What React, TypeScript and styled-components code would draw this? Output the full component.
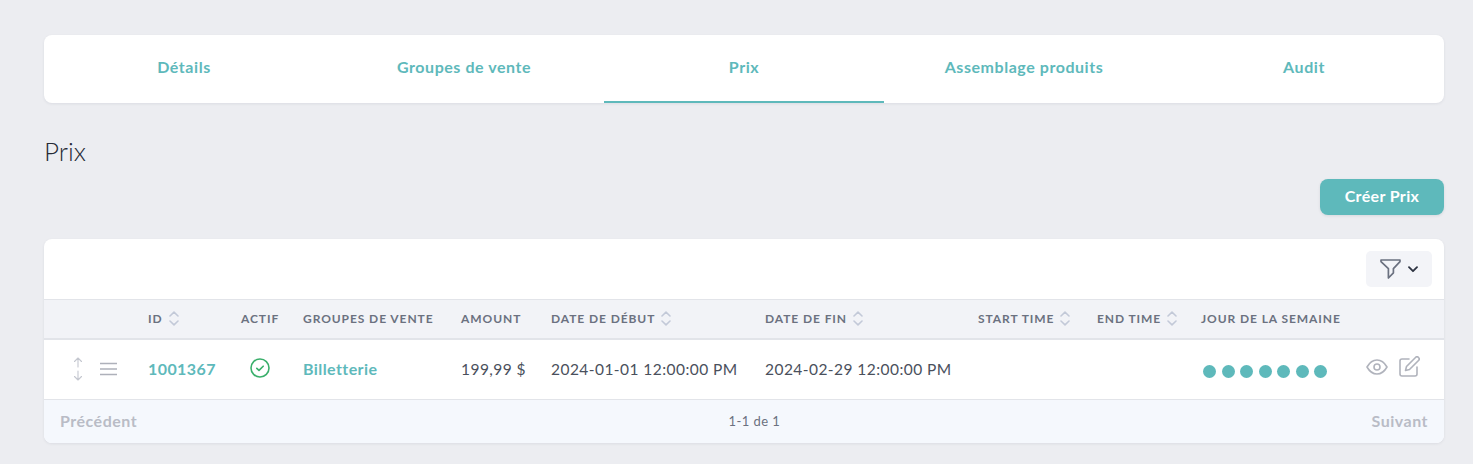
import React from "react";
import styled, { createGlobalStyle } from "styled-components";

const Global = createGlobalStyle`
  html, body { margin: 0; padding: 0; background: #ecedf1; }
  body { font-family: "Lato", "Open Sans", "Liberation Sans", sans-serif; color: #2d3341; }
  * { box-sizing: border-box; }
`;

const Page = styled.div`
  width: 1473px;
  height: 464px;
  padding: 35px 29px 0 44px;
  overflow: hidden;
`;

const Tabs = styled.nav`
  display: grid;
  grid-template-columns: repeat(5, 280px);
  height: 68px;
  background: #fff;
  border-radius: 8px;
  box-shadow: 0 1px 3px rgba(30, 40, 60, 0.08);
  overflow: hidden;
`;

const Tab = styled.a<{ $active?: boolean }>`
  display: flex;
  align-items: center;
  justify-content: center;
  font-size: 16px;
  font-weight: 700;
  letter-spacing: 0.55px;
  color: #5eb9bb;
  padding-bottom: 4px;
  border-bottom: 2px solid ${(p) => (p.$active ? "#5eb9bb" : "transparent")};
`;

const Title = styled.h2`
  margin: 33px 0 0;
  height: 30px;
  font-size: 26px;
  line-height: 30px;
  font-weight: 300;
  color: #262b36;
`;

const Actions = styled.div`
  display: flex;
  justify-content: flex-end;
  margin-top: 13px;
`;

const PrimaryButton = styled.button`
  width: 124px;
  height: 36px;
  padding: 0 0 3px;
  border: 0;
  border-radius: 8px;
  background: #5eb9bb;
  color: #fff;
  font: 700 16px "Lato", sans-serif;
  letter-spacing: 0.35px;
  box-shadow: 0 1px 3px rgba(30, 40, 60, 0.1);
`;

const Card = styled.section`
  margin-top: 24px;
  height: 204px;
  background: #fff;
  border-radius: 8px;
  box-shadow: 0 1px 3px rgba(30, 40, 60, 0.08);
  overflow: hidden;
`;

const Toolbar = styled.div`
  display: flex;
  justify-content: flex-end;
  align-items: center;
  height: 60px;
  padding: 0 12px;
`;

const FilterButton = styled.button`
  display: flex;
  align-items: center;
  justify-content: center;
  gap: 7px;
  width: 66px;
  height: 36px;
  padding: 0;
  border: 0;
  border-radius: 5px;
  background: #f3f4f8;
`;

const Table = styled.table`
  width: 1400px;
  table-layout: fixed;
  border-collapse: collapse;
`;

const HeadRow = styled.tr`
  height: 39px;
  background: #f2f3f7;
  border-top: 1px solid #e2e4e9;
  border-bottom: 2px solid #e2e4e9;
`;

const Th = styled.th<{ $w: number }>`
  width: ${(p) => p.$w}px;
  padding: 0 0 0 12px;
  text-align: left;
  font-size: 12px;
  font-weight: 700;
  letter-spacing: 0.92px;
  color: #6b7180;
  white-space: nowrap;
`;

const HeadInner = styled.span`
  display: inline-flex;
  align-items: center;
  gap: 6px;
`;

const Row = styled.tr`
  height: 60px;
`;

const Td = styled.td`
  padding: 0 0 1px 12px;
  font-size: 15.5px;
  font-weight: 400;
  letter-spacing: 0.45px;
  color: #4a505c;
  white-space: nowrap;
`;

const TdLink = styled(Td)`
  font-size: 16px;
  font-weight: 700;
  color: #5eb9bb;
  letter-spacing: 0.42px;
`;

const StatusCell = styled.td`
  padding: 0 0 3px 0;
  text-align: center;
  line-height: 0;
`;

const HandleCell = styled.td`
  padding: 0 0 0 29px;
`;

const Handles = styled.div`
  display: flex;
  align-items: center;
  gap: 17px;
`;

const Dots = styled.div`
  display: flex;
  gap: 5.5px;
  padding: 5px 0 0 2px;
`;

const Dot = styled.span`
  width: 13px;
  height: 13px;
  border-radius: 50%;
  background: #5eb9bb;
`;

const RowIcons = styled.div`
  display: flex;
  align-items: center;
  gap: 11px;
  padding-left: 3px;
  margin-top: -4px;
`;

const Footer = styled.div`
  display: flex;
  justify-content: space-between;
  align-items: center;
  height: 45px;
  padding: 0 16px 2px;
  background: #f5f8fd;
  border-top: 1px solid #e2e4e9;
`;

const PageLink = styled.span`
  font-size: 16px;
  font-weight: 700;
  letter-spacing: 0.5px;
  color: #b9bcc6;
`;

const PageInfo = styled.span`
  font-size: 13px;
  letter-spacing: 0.45px;
  color: #6b7180;
`;

const SortIcon = () => (
  <svg width="10" height="15" viewBox="0 0 10 15" fill="none" stroke="#c3c9d8" strokeWidth="1.6" strokeLinecap="round" strokeLinejoin="round">
    <path d="M1 5 5 1.200l4 3.800" />
    <path d="M1 10l4 3.800L9 10" />
  </svg>
);

const FilterIcon = () => (
  <svg width="21" height="20" viewBox="0 0 21 20" fill="none" stroke="#6b7180" strokeWidth="1.7" strokeLinejoin="round">
    <path d="M1 1h19v1.600l-6.600 7v4.200L8.400 19v-9.400L1 2.600z" />
  </svg>
);

const Chevron = () => (
  <svg width="10" height="7" viewBox="0 0 10 7" fill="none" stroke="#2d3341" strokeWidth="1.8" strokeLinecap="round" strokeLinejoin="round">
    <path d="M1 1.200 5 5.200l4-4" />
  </svg>
);

const MoveIcon = () => (
  <svg width="10" height="24" viewBox="0 0 10 24" fill="none" stroke="#c4c7cf" strokeWidth="1.1" strokeLinecap="round" strokeLinejoin="round">
    <path d="M5 1v9M1.500 4.500 5 1l3.500 3.500" />
    <path d="M5 14v9M1.500 19.500 5 23l3.500-3.500" />
  </svg>
);

const MenuIcon = () => (
  <svg width="17" height="14" viewBox="0 0 17 14" fill="none" stroke="#aeb1ba" strokeWidth="1.7">
    <path d="M0 1.500h17M0 7h17M0 12.500h17" />
  </svg>
);

const CheckIcon = () => (
  <svg width="20" height="20" viewBox="0 0 20 20" fill="none" stroke="#3aaf6b" strokeWidth="1.6" strokeLinecap="round" strokeLinejoin="round">
    <circle cx="10" cy="10" r="9" />
    <path d="M6.800 10.300l2.200 2.100 4.200-4.200" />
  </svg>
);

const EyeIcon = () => (
  <svg width="22" height="16" viewBox="0 0 22 16" fill="none" stroke="#b0b3bc" strokeWidth="1.6" strokeLinejoin="round">
    <path d="M1 8c2.600-4.600 6-7 10-7s7.400 2.400 10 7c-2.600 4.600-6 7-10 7s-7.400-2.400-10-7z" />
    <circle cx="11" cy="8" r="3" />
  </svg>
);

const EditIcon = () => (
  <svg width="21" height="21" viewBox="0 0 21 21" fill="none" stroke="#b0b3bc" strokeWidth="1.6" strokeLinecap="round" strokeLinejoin="round">
    <path d="M10 3H3a2 2 0 0 0-2 2v13a2 2 0 0 0 2 2h13a2 2 0 0 0 2-2v-7" />
    <path d="M16.500 1.500a2 2 0 0 1 3 3L10.500 13.500l-4 1 1-4z" />
  </svg>
);

const columns: { label: string; w: number; sort?: boolean }[] = [
  { label: "", w: 92 },
  { label: "ID", w: 93, sort: true },
  { label: "ACTIF", w: 62 },
  { label: "GROUPES DE VENTE", w: 158 },
  { label: "AMOUNT", w: 90 },
  { label: "DATE DE DÉBUT", w: 214, sort: true },
  { label: "DATE DE FIN", w: 213, sort: true },
  { label: "START TIME", w: 119, sort: true },
  { label: "END TIME", w: 104, sort: true },
  { label: "JOUR DE LA SEMAINE", w: 162 },
  { label: "", w: 93 },
];

export default function App() {
  return (
    <Page>
      <Global />
      <Tabs>
        <Tab>Détails</Tab>
        <Tab>Groupes de vente</Tab>
        <Tab $active>Prix</Tab>
        <Tab>Assemblage produits</Tab>
        <Tab>Audit</Tab>
      </Tabs>
      <Title>Prix</Title>
      <Actions>
        <PrimaryButton>Créer Prix</PrimaryButton>
      </Actions>
      <Card>
        <Toolbar>
          <FilterButton>
            <FilterIcon />
            <Chevron />
          </FilterButton>
        </Toolbar>
        <Table>
          <thead>
            <HeadRow>
              {columns.map((c, i) => (
                <Th key={i} $w={c.w}>
                  <HeadInner>
                    {c.label}
                    {c.sort && <SortIcon />}
                  </HeadInner>
                </Th>
              ))}
            </HeadRow>
          </thead>
          <tbody>
            <Row>
              <HandleCell>
                <Handles>
                  <MoveIcon />
                  <MenuIcon />
                </Handles>
              </HandleCell>
              <TdLink>1001367</TdLink>
              <StatusCell>
                <CheckIcon />
              </StatusCell>
              <TdLink>Billetterie</TdLink>
              <Td>199,99 $</Td>
              <Td>2024-01-01 12:00:00 PM</Td>
              <Td>2024-02-29 12:00:00 PM</Td>
              <Td />
              <Td />
              <Td>
                <Dots>
                  {Array.from({ length: 7 }, (_, i) => (
                    <Dot key={i} />
                  ))}
                </Dots>
              </Td>
              <Td>
                <RowIcons>
                  <EyeIcon />
                  <EditIcon />
                </RowIcons>
              </Td>
            </Row>
          </tbody>
        </Table>
        <Footer>
          <PageLink>Précédent</PageLink>
          <PageInfo>1-1 de 1</PageInfo>
          <PageLink>Suivant</PageLink>
        </Footer>
      </Card>
    </Page>
  );
}
